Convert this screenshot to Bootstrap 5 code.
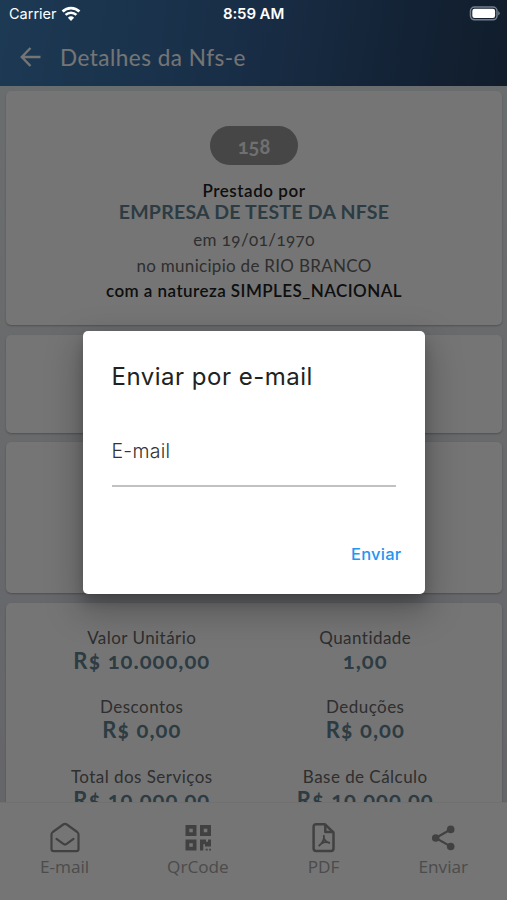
<!DOCTYPE html>
<html lang="pt-BR">
<head>
<meta charset="utf-8">
<meta name="viewport" content="width=device-width, initial-scale=1">
<title>Detalhes da Nfs-e</title>
<link href="https://cdn.jsdelivr.net/npm/bootstrap@5.3.0/dist/css/bootstrap.min.css" rel="stylesheet">
<style>
  body { font-family: Lato, "Liberation Sans", sans-serif; font-variant-numeric: oldstyle-nums; font-variant-ligatures: none; color: #666; white-space: nowrap; }
  .screen { height: 900px; background: linear-gradient(#e9f0f0, #dcdce6); }
  .app-top { height: 86px; background: linear-gradient(100deg, #3f7db6, #37669c 45%, #29486e 85%, #26405e); }
  .status-bar { height: 28px; z-index: 5; font-family: Inter, Roboto, sans-serif; font-size: 14.5px; padding: 0 7px 0 9px; }
  .status-side { width: 119px; }
  .status-clock { font-weight: 600; font-size: 15px; letter-spacing: -.1px; margin-right: 2px; }
  .title-row { height: 58px; padding-left: 19px; gap: 18px; }
  .page-title { font-size: 22.5px; letter-spacing: .5px; padding-top: 1px; }
  .content-area { padding: 5px 5px 0 6px; gap: 9.5px; }
  .panel { border: 0; border-radius: 5px; box-shadow: 0 1px 2px rgba(0,0,0,.25); flex: none; }
  .panel-a { height: 234px; padding-top: 35px; }
  .panel-b { height: 98px; }
  .panel-c { height: 151px; }
  .panel-d { height: 300px; padding: 24px 25px 0 24px; }
  .num-pill { width: 88px; height: 39px; background: #989898; color: #f4f4f4; font-size: 20px; font-weight: 700; margin-bottom: 15px; }
  .ln { font-size: 17px; line-height: 26px; }
  .ln-by { line-height: 21px; font-weight: 600; color: #222; letter-spacing: .55px; }
  .ln-co { font-size: 19.5px; line-height: 22px; margin-bottom: 4px; font-weight: 700; color: #628492; letter-spacing: .24px; }
  .ln-date { letter-spacing: .42px; }
  .ln-city { letter-spacing: .3px; line-height: 25px; }
  .ln-nat { font-weight: 600; color: #222; letter-spacing: .45px; line-height: 25px; }
  .amount-row { margin-bottom: 23.5px; }
  .amount-label { font-size: 17px; line-height: 22px; letter-spacing: .46px; }
  .amount { font-size: 22px; line-height: 24px; font-weight: 700; color: #628492; letter-spacing: 1px; }
  .bottom-nav { height: 98px; background: #fff; border-top: 1px solid #f3f3f3; padding: 18px 0 0 1px; color: #a5a5a5; font-family: "Open Sans", "Noto Sans", sans-serif; font-size: 17.2px; }
  .bottom-nav svg { color: #8f8f8f; width: 34px; height: 34px; }
  .nav-text { line-height: 24px; }
  .scrim { background: rgba(0,0,0,.54); padding-top: 25px; }
  .dialog-box { width: 342px; height: 263px; border-radius: 5px; padding: 28px 29px 27px; box-shadow: 0 14px 34px 4px rgba(0,0,0,.26), 0 8px 12px rgba(0,0,0,.16); font-family: Inter, Roboto, sans-serif; color: #222; }
  .dialog-heading { font-size: 24px; line-height: 35px; letter-spacing: .5px; }
  .mail-field { margin-top: 42px; height: 51px; border-bottom: 2px solid #c1c1c1; font-size: 19.5px; line-height: 31px; font-weight: 300; color: #333; letter-spacing: .25px; }
  .send-btn { color: #2196f3; font-size: 16.5px; font-weight: 500; line-height: 26px; letter-spacing: .25px; margin-right: -6px; }
</style>
<script src="https://cdn.jsdelivr.net/npm/bootstrap@5.3.0/dist/js/bootstrap.bundle.min.js"></script>
</head>
<body>
<div class="screen position-relative overflow-hidden d-flex flex-column">
  <header class="app-top flex-shrink-0 text-white">
    <div class="status-bar position-relative d-flex align-items-center justify-content-between">
      <div class="status-side d-flex align-items-center">
        <span>Carrier</span>
        <svg class="ms-1" width="20" height="16" viewBox="0 0 20 16" fill="none" stroke="currentColor" stroke-width="2.7"><path d="M1.600 5.500a12 12 0 0 1 16.800 0M4.600 8.900a7.800 7.800 0 0 1 10.800 0"/><path d="M10 15 6.900 11.700a4.500 4.500 0 0 1 6.200 0z" fill="currentColor" stroke="none"/></svg>
      </div>
      <span class="status-clock">8:59 AM</span>
      <div class="status-side text-end d-flex justify-content-end">
        <svg width="32" height="16" viewBox="0 0 32 16"><rect x="2.500" y="1" width="26.500" height="12.800" rx="4" fill="none" stroke="#747f8c" stroke-width="1.500"/><rect x="4.300" y="2.800" width="22.800" height="9.200" rx="2.200" fill="#fff"/><path d="M30.200 5q3 2.300 0 4.600z" fill="#747f8c"/></svg>
      </div>
    </div>
    <div class="title-row d-flex align-items-center">
      <svg width="23" height="22" viewBox="0 0 23 22" fill="none" stroke="currentColor" stroke-width="2.4"><path d="M21.500 11H3M11.500 2 2.800 11l8.700 9"/></svg>
      <span class="page-title">Detalhes da Nfs-e</span>
    </div>
  </header>

  <main class="content-area flex-grow-1 d-flex flex-column overflow-hidden text-center">
    <section class="card panel panel-a align-items-center">
      <div class="num-pill rounded-pill d-flex align-items-center justify-content-center">158</div>
      <div class="ln ln-by">Prestado por</div>
      <div class="ln ln-co">EMPRESA DE TESTE DA NFSE</div>
      <div class="ln ln-date">em 19/01/1970</div>
      <div class="ln ln-city">no municipio de RIO BRANCO</div>
      <div class="ln ln-nat">com a natureza SIMPLES_NACIONAL</div>
    </section>
    <section class="card panel panel-b"></section>
    <section class="card panel panel-c"></section>
    <section class="card panel panel-d">
      <div class="row g-0 amount-row">
        <div class="col-6"><div class="amount-label">Valor Unitário</div><div class="amount">R$ 10.000,00</div></div>
        <div class="col-6"><div class="amount-label">Quantidade</div><div class="amount">1,00</div></div>
      </div>
      <div class="row g-0 amount-row">
        <div class="col-6"><div class="amount-label">Descontos</div><div class="amount">R$ 0,00</div></div>
        <div class="col-6"><div class="amount-label">Deduções</div><div class="amount">R$ 0,00</div></div>
      </div>
      <div class="row g-0 amount-row">
        <div class="col-6"><div class="amount-label">Total dos Serviços</div><div class="amount">R$ 10.000,00</div></div>
        <div class="col-6"><div class="amount-label">Base de Cálculo</div><div class="amount">R$ 10.000,00</div></div>
      </div>
    </section>
  </main>

  <nav class="bottom-nav flex-shrink-0 d-flex justify-content-around align-items-start">
    <div class="d-flex flex-column align-items-center">
      <svg viewBox="0 0 34 34" fill="none" stroke="currentColor" stroke-width="2.2" stroke-linejoin="round" stroke-linecap="round"><path d="M3.500 13.500Q3.500 12 4.800 11L15.200 3.500Q17 2.200 18.800 3.500L29.200 11Q30.500 12 30.500 13.500V28Q30.500 30.200 28.300 30.200H5.700Q3.500 30.200 3.500 28Z"/><path d="M8.500 17.800 15 22.700Q17 24.300 19 22.700L25.500 17.800"/></svg>
      <span class="nav-text">E-mail</span>
    </div>
    <div class="d-flex flex-column align-items-center">
      <svg viewBox="0 0 34 34" fill="currentColor" fill-rule="evenodd"><path d="M4.500 4h11v11h-11zM8.300 7.800v3.500h3.500V7.800zM19 4h11v11H19zM22.800 7.800v3.500h3.500V7.800zM4.500 18.500h11v11h-11zM8.300 22.300v3.500h3.500v-3.500zM19 18.500h6v2.300h2v-2.300h3v7h-6v-2.300h-1.700v6.300H19zM24.700 27.700h2v1.800h-2zM28.200 27.700H30v1.800h-1.800z"/></svg>
      <span class="nav-text">QrCode</span>
    </div>
    <div class="d-flex flex-column align-items-center">
      <svg viewBox="0 0 34 34" fill="none" stroke="currentColor" stroke-width="2.5" stroke-linejoin="round"><path d="M9 3.200h8.800l8.700 8.300V27.500q0 2.400-2.400 2.400H9q-2.400 0-2.400-2.400V5.600Q6.600 3.200 9 3.200z"/><path d="M18.300 3.700v7.300h8"/><path d="M16.700 14c1.200 4.500-.8 7.600-4.900 11.100M11.800 25.100c3.200-4.300 6.800-4.800 11.200-3M17 17.300c1 2.500 2.600 4 5.900 4.700" stroke-width="1.8"/></svg>
      <span class="nav-text">PDF</span>
    </div>
    <div class="d-flex flex-column align-items-center">
      <svg viewBox="0 0 34 34" fill="currentColor"><path d="M25 8.300 9.700 17 25 25.600" fill="none" stroke="currentColor" stroke-width="2.200"/><circle cx="24.700" cy="8.400" r="3.800"/><circle cx="9.700" cy="17" r="3.800"/><circle cx="24.700" cy="25.500" r="3.800"/></svg>
      <span class="nav-text">Enviar</span>
    </div>
  </nav>

  <div class="scrim position-absolute top-0 start-0 w-100 h-100 d-flex align-items-center justify-content-center">
    <div class="dialog-box bg-white d-flex flex-column" role="dialog">
      <div class="dialog-heading">Enviar por e-mail</div>
      <div class="mail-field">E-mail</div>
      <div class="send-btn mt-auto align-self-end" role="button">Enviar</div>
    </div>
  </div>
</div>
</body>
</html>
